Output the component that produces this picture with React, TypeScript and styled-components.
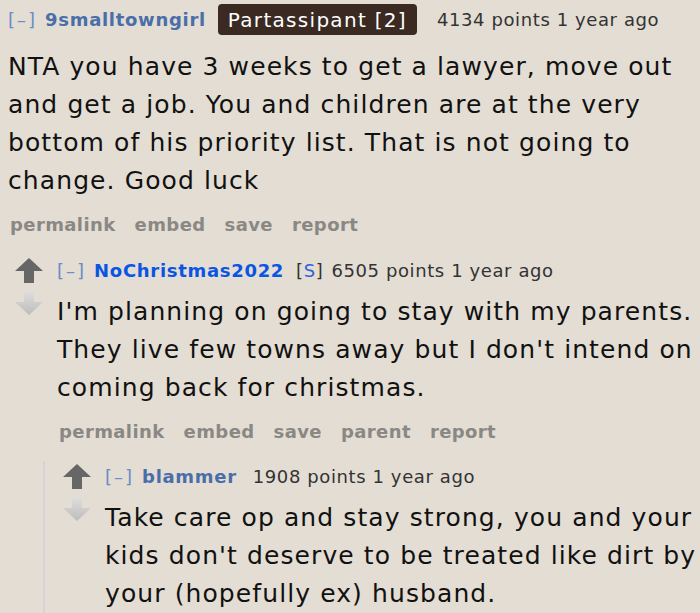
import React from 'react';
import styled, { createGlobalStyle } from 'styled-components';

type CommentData = {
    author: string;
    submitter?: boolean;
    flair?: string;
    points: number;
    age: string;
    body: string[];
    actions: string[];
    children?: CommentData[];
};

const thread: CommentData = {
    author: '9smalltowngirl',
    flair: 'Partassipant [2]',
    points: 4134,
    age: '1 year ago',
    body: [
        'NTA you have 3 weeks to get a lawyer, move out',
        'and get a job. You and children are at the very',
        'bottom of his priority list. That is not going to',
        'change. Good luck',
    ],
    actions: ['permalink', 'embed', 'save', 'report'],
    children: [
        {
            author: 'NoChristmas2022',
            submitter: true,
            points: 6505,
            age: '1 year ago',
            body: [
                "I'm planning on going to stay with my parents.",
                "They live few towns away but I don't intend on",
                'coming back for christmas.',
            ],
            actions: ['permalink', 'embed', 'save', 'parent', 'report'],
            children: [
                {
                    author: 'blammer',
                    points: 1908,
                    age: '1 year ago',
                    body: [
                        'Take care op and stay strong, you and your',
                        "kids don't deserve to be treated like dirt by",
                        'your (hopefully ex) husband.',
                    ],
                    actions: [],
                },
            ],
        },
    ],
};

const Arrow = ({ down }: { down?: boolean }) => (
    <svg width="28" height="25" viewBox="0 0 28 25">
        <defs>
            <linearGradient id="dn" x1="0" y1="0" x2="0" y2="1">
                <stop offset="0" stopColor="#e2e0de" />
                <stop offset="1" stopColor="#bcbcbc" />
            </linearGradient>
        </defs>
        {down ? (
            <path d="M9 0 H19 V12 H28 L14 25 L0 12 H9 Z" fill="url(#dn)" />
        ) : (
            <path d="M14 0 L28 13 H19 V25 H9 V13 H0 Z" fill="#666666" />
        )}
    </svg>
);

const Comment = ({ data, top, depth }: { data: CommentData; top?: boolean; depth: number }) => (
    <Thing>
        <Row>
            {!top && (
                <Votes>
                    <Arrow />
                    <Arrow down />
                </Votes>
            )}
            <Entry>
                <Tagline>
                    <Expand>[–]</Expand>
                    <Author $submitter={data.submitter}>{data.author}</Author>
                    {data.submitter && (
                        <Submitter>
                            [<span>S</span>]
                        </Submitter>
                    )}
                    {data.flair && <Flair>{data.flair}</Flair>}
                    <Score $gap={!data.submitter}>
                        {data.points} points {data.age}
                    </Score>
                </Tagline>
                <Body $flair={!!data.flair}>
                    {data.body.map((line) => (
                        <p key={line}>{line}</p>
                    ))}
                </Body>
                {data.actions.length > 0 && (
                    <Buttons>
                        {data.actions.map((a) => (
                            <li key={a}>{a}</li>
                        ))}
                    </Buttons>
                )}
            </Entry>
        </Row>
        {data.children?.map((c) => (
            <Child key={c.author} $border={depth > 0}>
                <Comment data={c} depth={depth + 1} />
            </Child>
        ))}
    </Thing>
);

const App = () => (
    <Page>
        <GlobalStyle />
        <Comment data={thread} top depth={0} />
    </Page>
);

export default App;

const GlobalStyle = createGlobalStyle`
  html, body {
    margin: 0;
    padding: 0;
    background: #e3ddd3;
  }
  body {
    font-family: "DejaVu Sans", Verdana, sans-serif;
    overflow: hidden;
  }
`;

const Page = styled.div`
  width: 700px;
  height: 613px;
  overflow: hidden;
  background: #e3ddd3;
  padding: 4px 0 0 8px;
  box-sizing: border-box;
`;

const Thing = styled.div``;

const Row = styled.div`
  display: flex;
  align-items: flex-start;
`;

const Votes = styled.div`
  width: 28px;
  display: flex;
  flex-direction: column;
  gap: 7px;
  margin-top: 3px;
  margin-right: 14px;
  svg {
    display: block;
  }
`;

const Entry = styled.div`
  flex: 1;
`;

const Tagline = styled.div`
  display: flex;
  align-items: center;
  height: 31px;
  font-size: 18px;
  letter-spacing: 0.6px;
  color: #333;
  white-space: nowrap;
`;

const Expand = styled.span`
  color: #6a8cc8;
  letter-spacing: 2px;
  margin-right: 8px;
`;

const Author = styled.span<{ $submitter?: boolean }>`
  font-weight: bold;
  letter-spacing: 0.7px;
  color: ${(p) => (p.$submitter ? '#0a55e3' : '#4a6ea8')};
  margin-right: 12px;
`;

const Submitter = styled.span`
  color: #333;
  margin-right: 8px;
  span {
    color: #2f63d6;
  }
`;

const Flair = styled.span`
  background: #3b2a22;
  color: #fff;
  font-size: 20px;
  letter-spacing: 1.3px;
  border-radius: 4px;
  padding: 2px 10px;
  height: 31px;
  display: inline-flex;
  align-items: center;
  box-sizing: border-box;
  margin-right: 16px;
`;

const Score = styled.span<{ $gap?: boolean }>`
  margin-left: ${(p) => (p.$gap ? '4px' : '0')};
`;

const Body = styled.div<{ $flair?: boolean }>`
  margin-top: ${(p) => (p.$flair ? '13px' : '7px')};
  font-size: 25px;
  line-height: 38px;
  letter-spacing: 1.1px;
  color: #111;
  p {
    margin: 0;
    white-space: nowrap;
  }
`;

const Buttons = styled.ul`
  list-style: none;
  margin: 9px 0 0 2px;
  padding: 0;
  display: flex;
  gap: 19px;
  font-size: 18px;
  font-weight: bold;
  letter-spacing: 0.4px;
  color: #8a8884;
  height: 30px;
  align-items: center;
`;

const Child = styled.div<{ $border?: boolean }>`
  margin-left: ${(p) => (p.$border ? '28px' : '7px')};
  margin-top: ${(p) => (p.$border ? '15px' : '16px')};
  padding-left: ${(p) => (p.$border ? '18px' : '0')};
  border-left: ${(p) => (p.$border ? '2px solid #d7d3dc' : 'none')};
  min-height: 200px;
`;
